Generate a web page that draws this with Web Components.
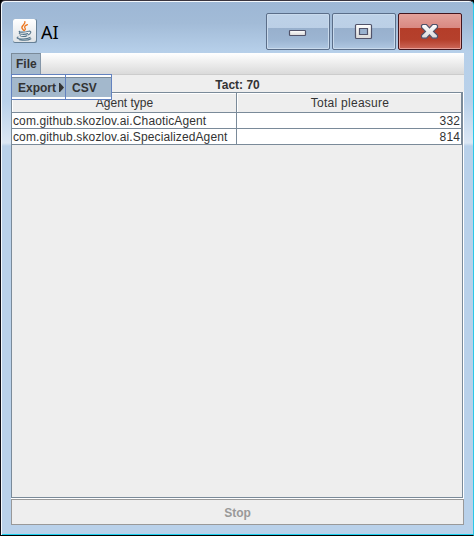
<!DOCTYPE html>
<html lang="en"><head><meta charset="utf-8"><title>AI</title>
<style>html,body{margin:0;height:536px;overflow:hidden;background:#000}</style></head>
<body>
<app-window>
  <title-bar slot="title">AI</title-bar>
  <menu-bar></menu-bar>
  <tact-label>Tact: 70</tact-label>
  <agent-table></agent-table>
  <swing-button>Stop</swing-button>
</app-window>
<script>
const define = (name, html) => customElements.define(name, class extends HTMLElement {
  constructor() { super(); this.attachShadow({mode:'open'}).innerHTML = html; }
});
define('app-window', `<style>
:host{display:flex;flex-direction:column;box-sizing:border-box;width:474px;height:536px;position:relative;
 border-left:1px solid #101018;border-top:1px solid #39343e;border-right:1px solid #28c8e8;border-bottom:1px solid #000;
 border-radius:5px 5px 0 0;overflow:hidden;font:12px "Liberation Sans",Arial,sans-serif;color:#333;
 box-shadow:inset 1px 1px 0 #f4f8fc,inset 0 -1px 0 #19cfee;
 background:linear-gradient(#9db7d5 0,#a2bbd7 22px,#b6cfe9 50px,#b9d1ea 100px,#dbe7f4 142px,#b9d1ea 145px,#b9d1ea 100%)}
.client{display:flex;flex-direction:column;margin:0 9px 0 10px;height:472px;background:#eee}
</style><slot name="title"></slot><div class="client"><slot></slot></div>`);
define('title-bar', `<style>
:host{display:flex;height:52px;box-sizing:border-box;padding:12px 11px 0 12px;color:#000}
.java{width:24px;height:24px;margin-top:6px}
.name{font:18px/24px "Noto Sans",sans-serif;margin:7px 0 0 4px;flex:1}
.buttons{display:flex;gap:2px}
</style><svg class="java" viewBox="0 0 24 24"><defs><linearGradient id="p" x2="0" y2="1"><stop stop-color="#fff"/><stop offset="1" stop-color="#dfe3e6"/></linearGradient></defs>
<rect x="0" y="0" width="24" height="24" rx="2" fill="#668096"/><rect width="23" height="23" rx="2" fill="url(#p)"/>
<g fill="none" stroke-linecap="round" transform="translate(-.9)"><path d="M12.8 2.6c1.3 2.8-5.2 4.3-2.5 7.2l1.2 1.5M15.3 5.6c-2.2.8-3.7 2-2.2 3.8.5.8-.1 1.6-.8 2.1" stroke="#ed761e" stroke-width="1.3"/>
<path d="M7.5 12.2c-2.8 1.2 6.5 1.2 8.2.2M7.2 14.1c-.6 1.7 7 1.5 8.3.4M8 16.5c.3 1.5 5.3 1.3 6.7.3M16.5 12.2c3.6-.7 2.5 2.8-.6 3.7M6 18c-4.8 2 8.7 3 12 .4M7.2 20.7c4.3.8 9.8.3 11.6-1" stroke="#55758b" stroke-width="1.05"/></g></svg>
<span class="name"><slot></slot></span>
<div class="buttons"><window-button kind="min"></window-button><window-button kind="max"></window-button><window-button kind="close"></window-button></div>`);
customElements.define('window-button', class extends HTMLElement {
  connectedCallback() {
    const kind = this.getAttribute('kind'), close = kind === 'close';
    const glyph = {
      min:'<rect x="23.5" y="17.5" width="16" height="5" rx=".7"/>',
      max:'<path fill-rule="evenodd" d="M24.5 11.5h14a1 1 0 0 1 1 1v12a1 1 0 0 1-1 1h-14a1 1 0 0 1-1-1v-12a1 1 0 0 1 1-1zM27.5 15.5v6h8v-6z"/>',
      close:'<path d="M24.5 11.5h4l3 3.3 3-3.3h4l1 1v2l-4 3.9 4 3.8v2l-1 1h-4l-3-3.3-3 3.3h-4l-1-1v-2l4-3.8-4-3.9v-2z"/>'
    }[kind];
    this.attachShadow({mode:'open'}).innerHTML = `<style>
:host{display:block;width:64px;height:37px;box-sizing:border-box;border:1px solid ${close?'#42151d':'#5b6e89'};border-radius:2px;
 box-shadow:inset 0 0 0 1px ${close?'#e7a099':'#c9daec'};
 background:${close?'linear-gradient(#e3a29b 0,#d98982 14px,#b43d29 14px,#b5402c 26px,#cc6759 100%)':'linear-gradient(#bed2e8 0,#bbcfe6 14px,#98b0cd 14px,#9cb5d2 26px,#b0c8e2 100%)'}}
svg{display:block;margin:-1px}
</style><svg width="64" height="37"><defs><linearGradient id="g" x2="0" y2="1"><stop stop-color="#fff"/><stop offset="1" stop-color="#d9d9d9"/></linearGradient></defs><g fill="url(#g)" stroke="#51536a" stroke-width="1.2">${glyph}</g></svg>`;
  }
});
define('menu-bar', `<style>
:host{display:block;height:22px;box-sizing:border-box;border-bottom:1px solid #ccc;background:linear-gradient(#fff,#dadada);position:relative;font-weight:bold;z-index:2;flex:none}
.file{width:30px;height:21px;box-sizing:border-box;background:#a3b8cc;border:1px solid #7a8a99;border-bottom:0;border-right-color:#8496a8;padding-left:4px;line-height:21px}
.popups{position:absolute;left:0;top:21px;display:flex}
</style><div class="file">File</div><div class="popups"><menu-popup style="width:55px">Export<svg slot="arrow" width="5" height="9"><path d="M0 0H1L5 4.5L1 9H0z" fill="#333"/></svg></menu-popup><menu-popup style="width:47px;margin-left:-1px">CSV</menu-popup></div>`);
define('menu-popup', `<style>
:host{display:block;box-sizing:border-box;height:26px;border:1px solid #6382bf;padding:2px 0;background:#fff}
div{height:20px;box-sizing:border-box;background:#a3b8cc;display:flex;align-items:center;justify-content:space-between;padding:0 1px 0 6px;line-height:20px;border-top:1px solid #7a8a99}
</style><div><span><slot></slot></span><slot name="arrow"></slot></div>`);
define('tact-label', `<style>:host{display:block;height:17px;flex:none;text-align:center;font-weight:bold;line-height:20px}</style><slot></slot>`);
define('agent-table', `<style>
:host{display:block;height:407px;flex:none;box-sizing:border-box;padding:0 1px 1px 0;background:#fff}
.pane{height:406px;box-sizing:border-box;border:1px solid #7a8a99;background:#eee}
.row{display:grid;grid-template:16px / 225px 225px;line-height:16px;letter-spacing:.12px}
.row>*{box-sizing:border-box;border-right:1px solid #7a8a99;border-bottom:1px solid #7a8a99;background:#fff;padding:0 1px;white-space:nowrap}
.row>:last-child{text-align:right}
.row.head{grid-template-rows:20px;line-height:21px}
.row.head>*{background:#eee;text-align:center!important;box-shadow:inset 1px 1px #fff}
.row.head>:first-child{letter-spacing:0;padding-left:2px}
.row.head>:last-child{letter-spacing:.28px;padding-left:3px}
</style><div class="pane"><div class="row head"><span>Agent type</span><span>Total pleasure</span></div>
<div class="row"><span>com.github.skozlov.ai.ChaoticAgent</span><span>332</span></div>
<div class="row"><span>com.github.skozlov.ai.SpecializedAgent</span><span>814</span></div></div>`);
define('swing-button', `<style>:host{display:block;height:26px;box-sizing:border-box;border:1px solid #999;background:#eee;text-align:center;font-weight:bold;line-height:26px;color:#999}</style><slot></slot>`);
</script></body></html>
